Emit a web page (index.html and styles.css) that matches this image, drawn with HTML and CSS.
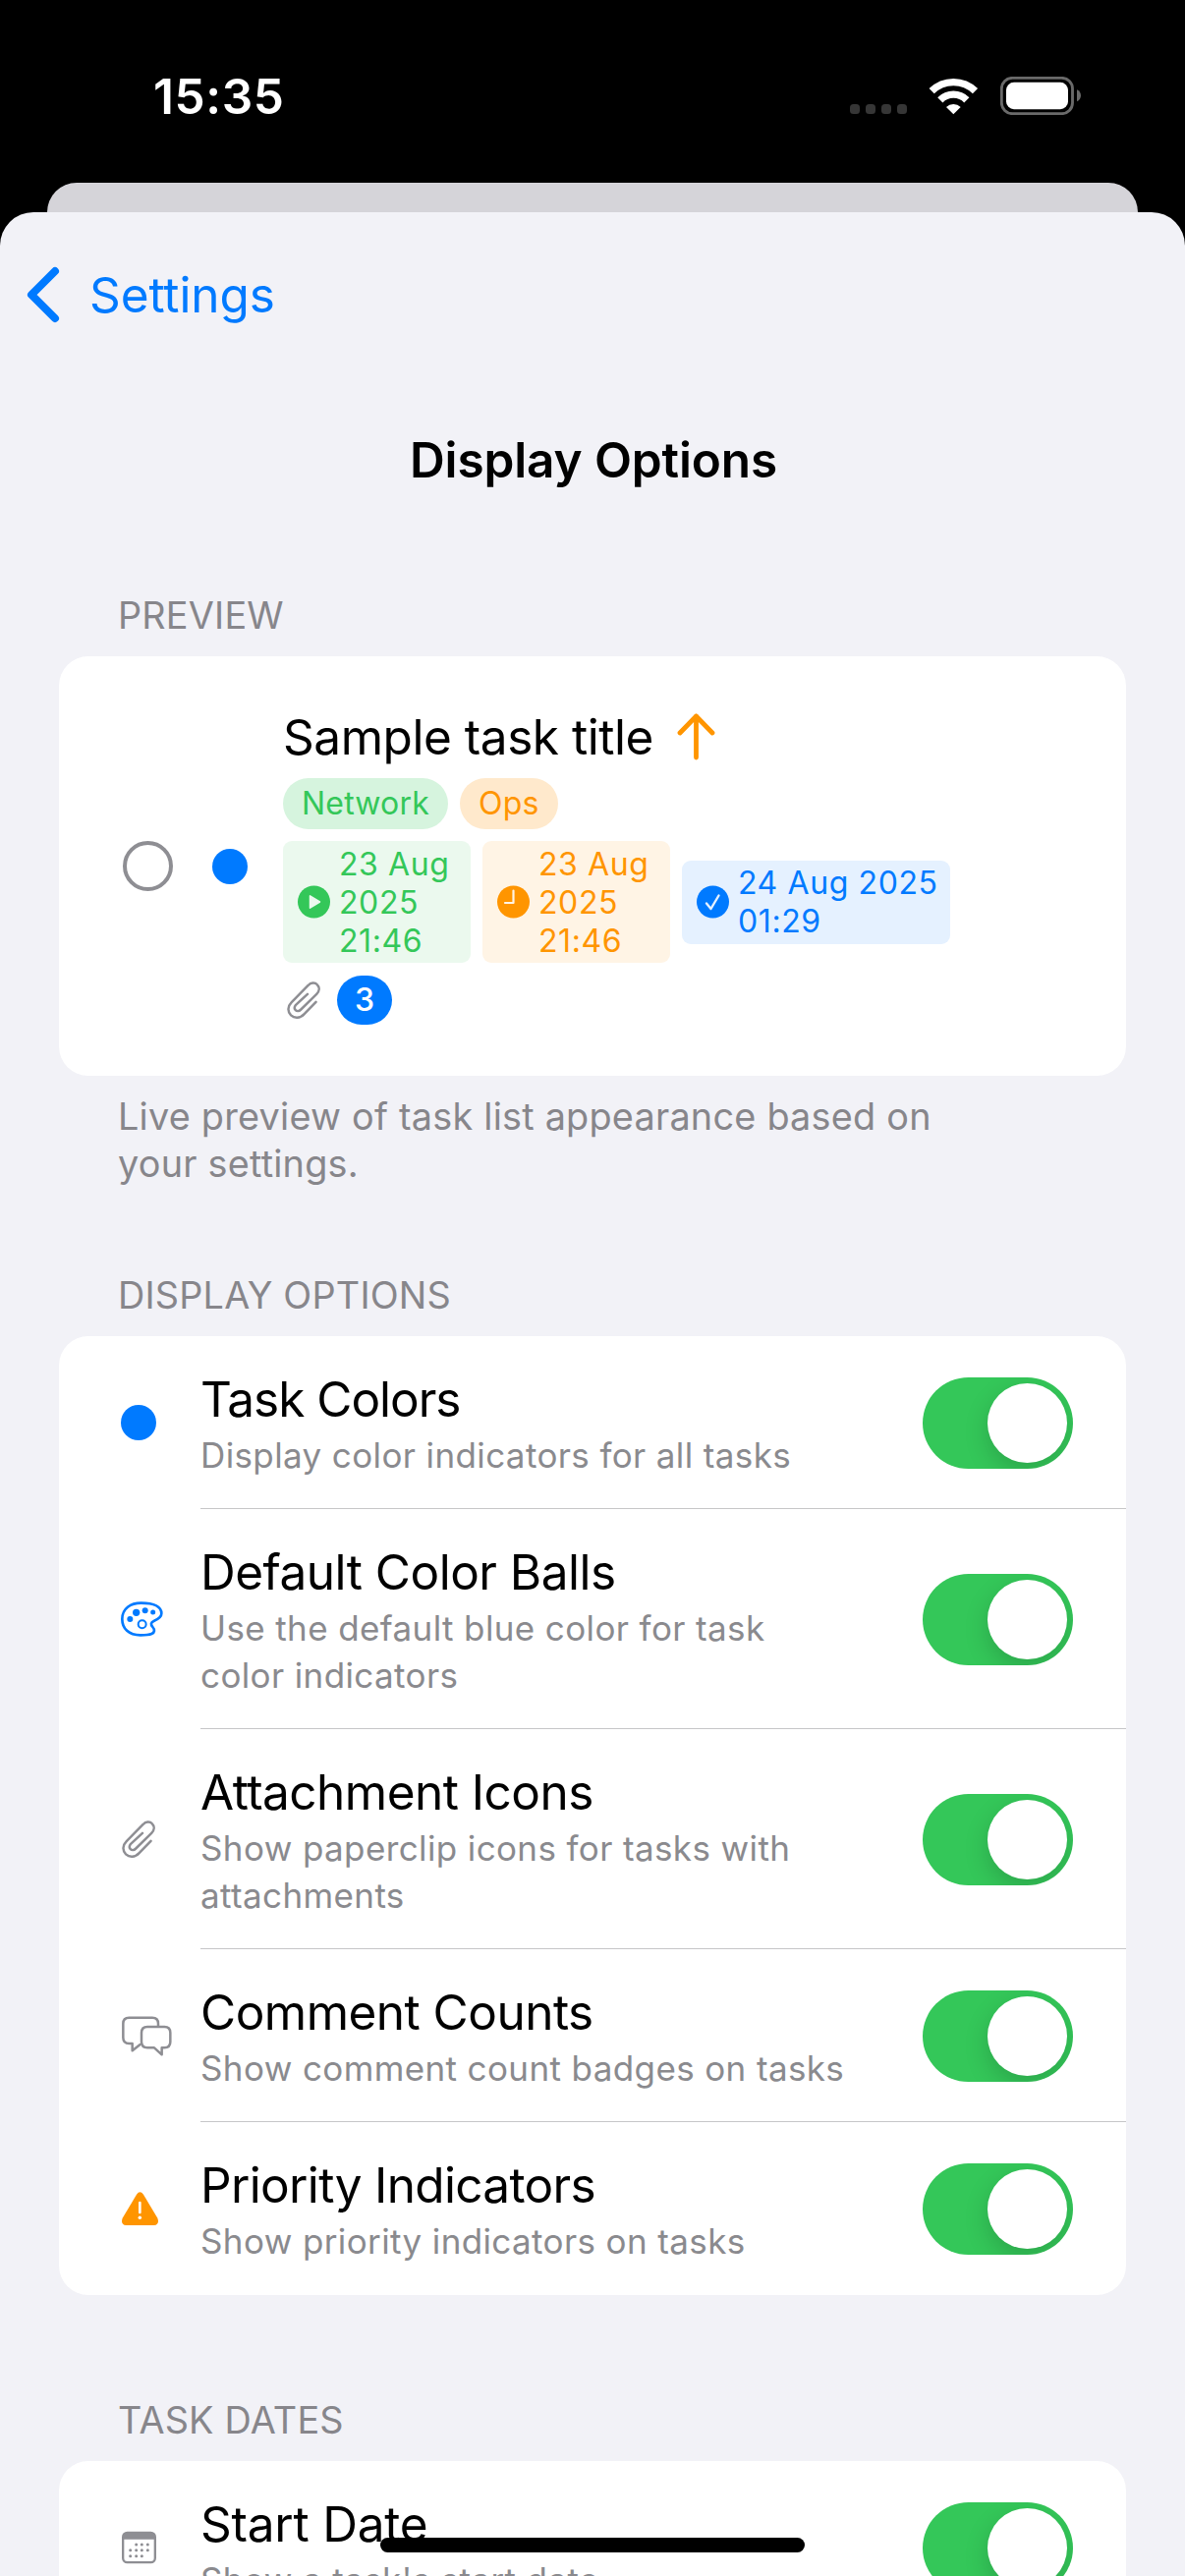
FILE: index.html
```html
<!DOCTYPE html>
<html lang="en">
<head>
<meta charset="utf-8">
<title>Display Options</title>
<link rel="stylesheet" href="styles.css">
</head>
<body>
<svg class="defs" aria-hidden="true">
  <symbol id="paperclip" viewBox="42 698 102 115">
    <path d="M131 761L95 798C82 812 65 812 54 802C43 791 43 775 56 762L107 710C115 701 128 700 135 708C143 716 142 728 133 737L84 785C79 790 72 790 68 786C64 782 65 775 69 770L105 737" fill="none" stroke="#8e8e93" stroke-width="7.500" stroke-linecap="round" stroke-linejoin="round"/>
  </symbol>
</svg>

<header class="status">
  <span class="time">15:35</span>
  <div class="status-icons">
    <div class="signal"><i></i><i></i><i></i><i></i></div>
    <svg class="wifi" width="51" height="38" viewBox="315 56 153 114">
      <g fill="none" stroke="#fff" stroke-width="22">
        <path d="M324.500 97A94.500 94.500 0 0 1 457.500 97"/>
        <path d="M350.500 124.500A57 57 0 0 1 431.500 124.500"/>
      </g>
      <path d="M391 168L369 146A32 32 0 0 1 413 146Z" fill="#fff"/>
    </svg>
    <svg class="battery" width="82" height="39" viewBox="534 54 246 117">
      <rect x="538" y="58" width="216.500" height="109" rx="33" fill="none" stroke="#6a6a6a" stroke-width="8.500"/>
      <rect x="552" y="71.500" width="189" height="82" rx="24" fill="#fff"/>
      <path d="M768 94C784 100 784 124 768 130Z" fill="#6a6a6a"/>
    </svg>
  </div>
</header>

<div class="back-sheet"></div>

<main class="sheet">
  <nav class="nav">
    <svg width="34" height="58" viewBox="0 0 34 58"><path d="M29 5L5 29L29 53" fill="none" stroke="#007aff" stroke-width="8" stroke-linecap="round" stroke-linejoin="round"/></svg>
    <span>Settings</span>
  </nav>
  <h1 class="title">Display Options</h1>

  <section class="section">
    <h2 class="section-head">PREVIEW</h2>
    <div class="card preview">
      <span class="check"></span>
      <span class="ball"></span>
      <div class="task">
        <div class="task-title">
          <span>Sample task title</span>
          <svg width="39" height="48" viewBox="0 0 39 48"><path d="M19.500 45V3M3 20L19.500 3L36 20" fill="none" stroke="#ff9500" stroke-width="4.800" stroke-linecap="round" stroke-linejoin="round"/></svg>
        </div>
        <div class="tags">
          <span class="tag green">Network</span>
          <span class="tag orange">Ops</span>
        </div>
        <div class="dates">
          <div class="date green">
            <svg width="33" height="38" viewBox="0 0 33 38"><circle cx="16.500" cy="19" r="16.500" fill="#34c759"/><path d="M12.500 12.800V25.200L22.500 19Z" fill="#ebf9ee" stroke="#ebf9ee" stroke-width="1.500" stroke-linejoin="round"/></svg>
            <span>23 Aug 2025 21:46</span>
          </div>
          <div class="date orange">
            <svg width="33" height="38" viewBox="0 0 33 38"><circle cx="16.500" cy="19" r="16.500" fill="#ff9500"/><path d="M16.500 7.500V20H8" fill="none" stroke="#fff4e5" stroke-width="2.200" stroke-linecap="round" stroke-linejoin="round"/></svg>
            <span>23 Aug 2025 21:46</span>
          </div>
          <div class="date blue">
            <svg width="33" height="38" viewBox="0 0 33 38"><circle cx="16.500" cy="19" r="16.500" fill="#007aff"/><path d="M10 20.500L14.500 26L22.500 12.500" fill="none" stroke="#e5f1ff" stroke-width="2.400" stroke-linecap="round" stroke-linejoin="round"/></svg>
            <span>24 Aug 2025 01:29</span>
          </div>
        </div>
        <div class="meta">
          <svg width="34" height="38"><use href="#paperclip"/></svg>
          <span class="count">3</span>
        </div>
      </div>
    </div>
    <p class="footnote">Live preview of task list appearance based on your settings.</p>
  </section>

  <section class="section after-note">
    <h2 class="section-head">DISPLAY OPTIONS</h2>
    <div class="card">
      <div class="row">
        <div class="icon"><span class="ball"></span></div>
        <div class="text"><h3 class="tight">Task Colors</h3><p>Display color indicators for all tasks</p></div>
        <span class="toggle"></span>
      </div>
      <div class="row">
        <div class="icon">
          <svg width="43" height="36" viewBox="38 31 129 108">
            <path d="M100 36C140 36 162 48 162 68C162 80 150 86 140 90C128 95 129 102 135 109C142 117 142 126 132 130C122 134 108 134 98 134C62 134 42 114 42 85C42 52 68 36 100 36Z" fill="none" stroke="#007aff" stroke-width="8"/>
            <g fill="#007aff"><circle cx="66" cy="85" r="9"/><circle cx="85" cy="65" r="11"/><circle cx="112" cy="59" r="9"/><circle cx="136" cy="64" r="7.500"/></g>
            <circle cx="103" cy="101" r="12" fill="none" stroke="#007aff" stroke-width="6"/>
          </svg>
        </div>
        <div class="text"><h3>Default Color Balls</h3><p>Use the default blue color for task color indicators</p></div>
        <span class="toggle"></span>
      </div>
      <div class="row">
        <div class="icon"><svg class="clip" width="34" height="38"><use href="#paperclip"/></svg></div>
        <div class="text"><h3>Attachment Icons</h3><p>Show paperclip icons for tasks with attachments</p></div>
        <span class="toggle"></span>
      </div>
      <div class="row">
        <div class="icon">
          <svg width="52" height="41" viewBox="39 1297 156 123">
            <g fill="none" stroke="#8e8e93" stroke-width="7.500" stroke-linejoin="round" stroke-linecap="round">
              <path d="M153 1327V1320C153 1308 147 1302 135 1302H64C52 1302 46 1308 46 1320V1363C46 1375 52 1381 64 1381H74V1403L98 1384"/>
              <path d="M120 1330H172C184 1330 190 1336 190 1348V1376C190 1388 184 1394 172 1394H164V1415L141 1394H120C108 1394 102 1388 102 1376V1348C102 1336 108 1330 120 1330Z"/>
            </g>
          </svg>
        </div>
        <div class="text"><h3>Comment Counts</h3><p>Show comment count badges on tasks</p></div>
        <span class="toggle"></span>
      </div>
      <div class="row">
        <div class="icon">
          <svg width="38" height="34" viewBox="39 33 114 102">
            <path d="M87 41Q97 27 108 41L151 113Q158 133 140 135H55Q37 133 44 113Z" fill="#ff9500"/>
            <path d="M97 66V96" stroke="#fff" stroke-width="8" stroke-linecap="round"/>
            <circle cx="97" cy="112" r="5.200" fill="#fff"/>
          </svg>
        </div>
        <div class="text"><h3 class="snug">Priority Indicators</h3><p>Show priority indicators on tasks</p></div>
        <span class="toggle"></span>
      </div>
    </div>
  </section>

  <section class="section after-card">
    <h2 class="section-head">TASK DATES</h2>
    <div class="card">
      <div class="row">
        <div class="icon">
          <svg width="36" height="34" viewBox="39 1070 108 102">
            <rect x="45.500" y="1075.500" width="98" height="91" rx="13" fill="#fff" stroke="#8e8e93" stroke-width="7"/>
            <path d="M45 1096V1088Q45 1075 58 1075H131Q144 1075 144 1088V1096Z" fill="#8e8e93"/>
            <g fill="#8e8e93"><circle cx="86" cy="1112" r="4.500"/><circle cx="103" cy="1112" r="4.500"/><circle cx="121" cy="1112" r="4.500"/><circle cx="68" cy="1129" r="4.500"/><circle cx="86" cy="1129" r="4.500"/><circle cx="103" cy="1129" r="4.500"/><circle cx="121" cy="1129" r="4.500"/><circle cx="68" cy="1147" r="4.500"/><circle cx="86" cy="1147" r="4.500"/><circle cx="103" cy="1147" r="4.500"/></g>
          </svg>
        </div>
        <div class="text"><h3 class="loose">Start Date</h3><p>Show a task's start date</p></div>
        <span class="toggle"></span>
      </div>
    </div>
  </section>
</main>
<div class="home-indicator"></div>
</body>
</html>
```
FILE: styles.css
```css
* { box-sizing: border-box; margin: 0; padding: 0; }

body {
  position: relative;
  width: 1206px;
  height: 2622px;
  overflow: hidden;
  background: #000;
  color: #000;
  font-family: Inter, "Liberation Sans", sans-serif;
  display: flex;
  flex-direction: column;
}

svg { display: block; flex: none; }
.defs { width: 0; height: 0; position: absolute; }

.status {
  flex: none;
  height: 186px;
  padding: 68px 106px 0 156px;
  display: flex;
  justify-content: space-between;
}
.time {
  color: #fff;
  font-size: 49.5px;
  line-height: 60px;
  font-weight: 600;
  letter-spacing: 0.6px;
}
.status-icons { display: flex; height: 60px; align-items: center; }
.signal { display: flex; gap: 6px; margin: 26px 22px 0 0; }
.signal i { width: 10px; height: 10px; border-radius: 3.5px; background: #363636; }
.wifi { margin-right: 22px; }
.wifi, .battery { margin-top: -1px; }

.back-sheet {
  flex: none;
  height: 30px;
  margin: 0 48px;
  border-radius: 32px 32px 0 0;
  background: #d5d4d9;
}

.sheet {
  flex: none;
  height: 2406px;
  padding: 54px 60px 0;
  border-radius: 34px 34px 0 0;
  background: #f2f2f7;
}
.nav {
  height: 60px;
  margin-left: -33px;
  display: flex;
  align-items: center;
  gap: 30px;
  color: #007aff;
  font-size: 49.5px;
  letter-spacing: -0.1px;
}
.title {
  margin-top: 108px;
  padding-left: 2px;
  text-align: center;
  font-size: 49.5px;
  line-height: 60px;
  font-weight: 600;
  letter-spacing: -0.12px;
}

.section { margin-top: 104px; }
.section.after-note { margin-top: 86px; }
.section.after-card { margin-top: 103px; }
.section-head {
  margin: 0 60px 18px;
  color: #87868b;
  font-size: 37.8px;
  line-height: 48px;
  font-weight: 400;
  letter-spacing: 0.2px;
}
.footnote {
  margin: 17px 140px 0 60px;
  color: #87868b;
  font-size: 37.8px;
  line-height: 48px;
  letter-spacing: 0.23px;
}
.card { border-radius: 30px; background: #fff; overflow: hidden; }

.ball { flex: none; width: 36px; height: 36px; border-radius: 50%; background: #007aff; }

.preview { height: 427px; display: flex; align-items: center; padding-left: 65px; }
.check { flex: none; width: 51px; height: 51px; border: 4.5px solid #8e8e93; border-radius: 50%; }
.preview .ball { margin: 0 36px 0 40px; }
.task { display: flex; flex-direction: column; gap: 12px; }
.task-title {
  display: flex;
  align-items: center;
  gap: 24px;
  font-size: 49.5px;
  line-height: 60px;
  letter-spacing: -0.45px;
}
.tags { display: flex; gap: 12px; font-size: 32px; line-height: 52px; }
.tag { padding: 0 19px; border-radius: 26px; letter-spacing: 0.2px; }
.tag.green { background: #d6f4de; color: #34c759; }
.tag.orange { background: #ffe9cc; color: #ff9500; }

.dates { display: flex; align-items: center; gap: 12px; font-size: 32px; line-height: 39px; }
.date {
  width: 191px;
  padding: 3.5px 10px 3.5px 15px;
  display: flex;
  align-items: center;
  gap: 9px;
  border-radius: 9px;
  letter-spacing: 0.6px;
}
.date.green { background: #ebf9ee; color: #34c759; }
.date.orange { background: #fff4e5; color: #ff9500; }
.date.blue { width: 273px; background: #e5f1ff; color: #007aff; }

.meta { display: flex; align-items: center; gap: 17px; padding-left: 4px; height: 51px; }
.count {
  width: 56px;
  height: 50px;
  border-radius: 25px;
  background: #007aff;
  color: #fff;
  font-size: 32px;
  line-height: 50px;
  font-weight: 500;
  text-align: center;
}

.row { display: flex; align-items: center; padding-left: 60px; position: relative; }
.icon { flex: none; width: 84px; padding-left: 3px; }
.icon .ball { display: block; }
.icon .clip { margin-left: 1px; }
.text {
  flex: 1;
  padding: 34px 280px 30px 0;
  border-bottom: 1px solid #c6c6c8;
}
.row:last-child .text { padding-bottom: 31px; border-bottom: 0; }
.text h3 {
  font-size: 49.5px;
  line-height: 61px;
  font-weight: 400;
  letter-spacing: -0.52px;
  white-space: nowrap;
}
.text h3.snug { letter-spacing: -0.66px; }
.text h3.tight { letter-spacing: -1.02px; }
.text h3.loose { letter-spacing: -0.22px; }
.text p {
  margin-top: 2px;
  color: #8a8a8e;
  font-size: 35px;
  line-height: 48px;
  letter-spacing: 0.38px;
}

/* Switch sits above the row's trailing padding so the separator runs to the card edge. */
.toggle {
  position: absolute;
  right: 54px;
  top: 50%;
  margin-top: -46.5px;
  width: 153px;
  height: 93px;
  border-radius: 46.5px;
  background: #34c759;
  overflow: hidden;
}
.toggle::after {
  content: "";
  display: block;
  width: 81px;
  height: 81px;
  margin: 6px 0 0 66px;
  border-radius: 50%;
  background: #fff;
  box-shadow: 0 9px 24px rgba(0, 0, 0, 0.17);
}

.home-indicator {
  position: absolute;
  left: 387px;
  top: 2583px;
  width: 432px;
  height: 15px;
  border-radius: 7.5px;
  background: #000;
}
```
